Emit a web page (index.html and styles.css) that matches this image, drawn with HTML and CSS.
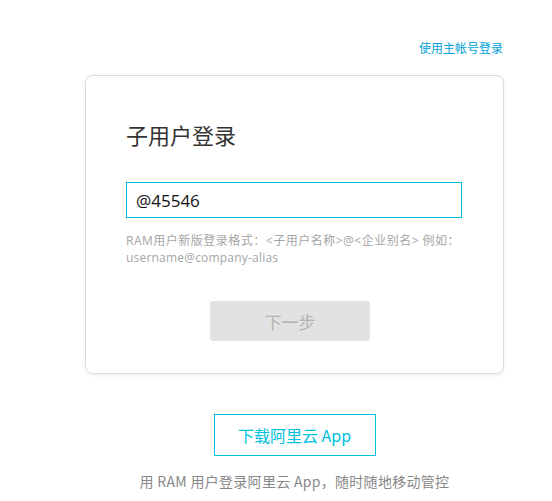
FILE: index.html
```html
<!DOCTYPE html>
<html lang="zh-CN">
<head>
    <meta charset="UTF-8">
    <meta name="viewport" content="width=device-width, initial-scale=1.0">
    <title>子用户登录</title>
    <link rel="stylesheet" href="styles.css">
</head>
<body>

<div class="top-bar">
    <a class="main-link" href="#">使用主帐号登录</a>
</div>

<div class="login-card">
    <h2 class="card-title">子用户登录</h2>
    <input class="user-input" type="text" value="@45546">
    <p class="hint">RAM用户新版登录格式：&lt;子用户名称&gt;@&lt;企业别名&gt; 例如：<span class="nowrap">username@company-alias</span></p>
    <div class="btn-row">
        <button class="next-btn" disabled>下一步</button>
    </div>
</div>

<div class="app-area">
    <a class="app-btn" href="#">下载阿里云 App</a>
    <p class="app-tip">用 RAM 用户登录阿里云 App，随时随地移动管控</p>
</div>

</body>
</html>
```

FILE: styles.css
```css
body {
    font-family: 'Noto Sans CJK SC', 'Open Sans', sans-serif;
    background-color: #fff;
    color: #333;
    margin: 0;
    padding: 0;
}

.top-bar {
    display: flex;
    justify-content: flex-end;
    padding: 38px 49px 0 0;
    height: 37px;
}

.main-link {
    font-size: 12px;
    line-height: 20px;
    color: #00a1d6;
    text-decoration: none;
}

.login-card {
    width: 336px;
    margin: 0 0 0 85px;
    height: 215px;
    padding: 40px 41px 42px 40px;
    border: 1px solid #dcdcdc;
    border-radius: 8px;
    box-shadow: 0 1px 4px rgba(0, 0, 0, 0.08);
    background: #fff;
}

.card-title {
    margin: 0 0 30px 0;
    font-size: 22px;
    font-weight: normal;
    line-height: 36px;
    color: #333;
}

.user-input {
    display: block;
    box-sizing: border-box;
    width: 336px;
    height: 36px;
    padding: 0 9px;
    border: 1px solid #00c1de;
    outline: none;
    font-family: 'Open Sans', 'Noto Sans CJK SC', sans-serif;
    font-size: 17px;
    color: #111;
}

.hint {
    margin: 14px 0 0 0;
    font-family: 'Open Sans', 'Noto Sans CJK SC', sans-serif;
    font-size: 12px;
    line-height: 17px;
    letter-spacing: 0.5px;
    color: #a6a6a6;
}

.nowrap {
    white-space: nowrap;
    letter-spacing: 0.2px;
}

.btn-row {
    display: flex;
    padding: 35px 0 0 84px;
}

.next-btn {
    width: 160px;
    height: 40px;
    border: none;
    border-radius: 3px;
    background-color: #e2e2e2;
    color: #b3b3b3;
    font-family: 'Noto Sans CJK SC', sans-serif;
    font-size: 17px;
}

.app-area {
    display: flex;
    flex-direction: column;
    align-items: center;
    padding: 40px 0 0 37px;
}

.app-btn {
    display: flex;
    align-items: center;
    justify-content: center;
    width: 160px;
    height: 40px;
    border: 1px solid #00c1de;
    color: #00c1de;
    font-size: 16px;
    text-decoration: none;
}

.app-tip {
    margin: 15px 0 0 0;
    font-size: 14px;
    line-height: 20px;
    letter-spacing: 0.3px;
    color: #888;
}
```
